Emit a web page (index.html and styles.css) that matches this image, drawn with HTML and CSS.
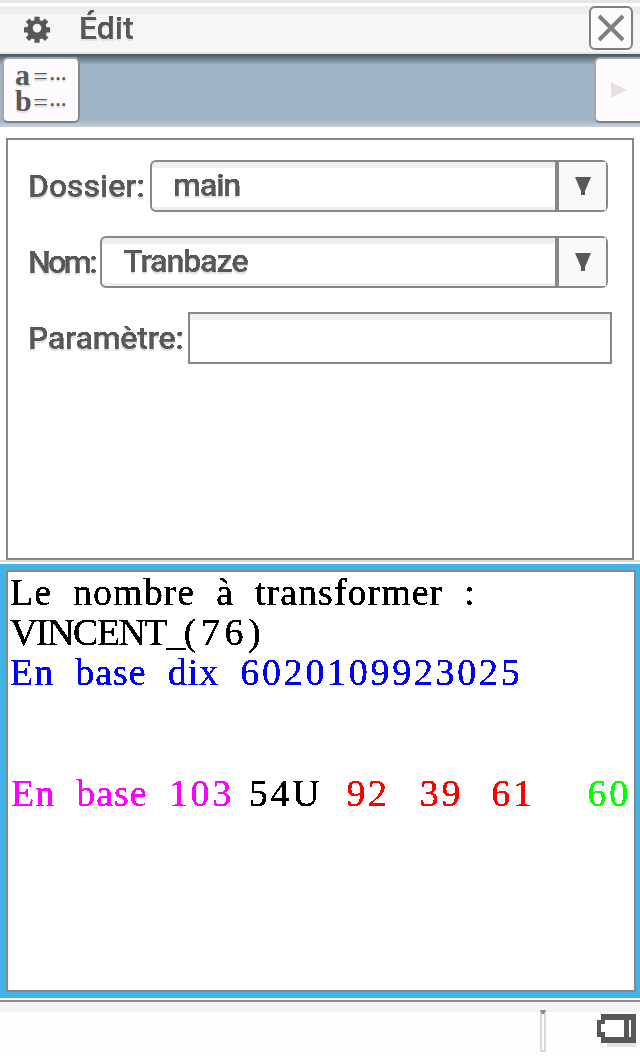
FILE: index.html
```html
<!DOCTYPE html>
<html lang="fr">
<head>
<meta charset="utf-8">
<title>Édit</title>
<link rel="stylesheet" href="styles.css">
</head>
<body>
<svg class="defs" width="0" height="0" aria-hidden="true">
  <filter id="crisp" x="0" y="-10%" width="100%" height="120%" color-interpolation-filters="sRGB">
    <feComponentTransfer><feFuncA type="discrete" tableValues="0 1 1 1"/></feComponentTransfer>
  </filter>
</svg>
<div class="app">
  <header class="menubar">
    <svg class="gear" width="30" height="30" viewBox="0 0 30 30">
      <path fill="#585858" fill-rule="evenodd" d="M12 2h6v4l3 1 3-3 4 4-3 3 1 3h4v6h-4l-1 3 3 3-4 4-3-3-3 1v4h-6v-4l-3-1-3 3-4-4 3-3-1-3H0v-6h4l1-3-3-3 4-4 3 3 3-1z M15 10a5 5 0 1 0 0 10a5 5 0 1 0 0-10z" transform="translate(2 2) scale(.87)"/>
    </svg>
    <span class="menu-label">Édit</span>
    <button class="close" aria-label="Fermer">
      <svg width="30" height="30" viewBox="0 0 30 30"><path d="M3 3l24 24M27 3L3 27" stroke="#808080" stroke-width="4" fill="none"/></svg>
    </button>
  </header>
  <div class="toolbar">
    <div class="tool-btn vars">
      <span class="var-line"><b>a</b><u>=</u><i>…</i></span>
      <span class="var-line"><b>b</b><u>=</u><i>…</i></span>
    </div>
    <div class="tool-btn more">
      <svg width="16" height="16" viewBox="0 0 16 16"><path d="M0 0l16 8L0 16z" fill="#e4e0e4"/></svg>
    </div>
  </div>
  <main class="panel form">
    <div class="row">
      <span class="label">Dossier:</span>
      <div class="select"><span class="value">main</span>
        <span class="arrow"><svg width="16" height="20" viewBox="0 0 16 20"><path d="M0 0h16L10 14v4H6v-4z" fill="#585858"/></svg></span>
      </div>
    </div>
    <div class="row">
      <span class="label label-nom">Nom:</span>
      <div class="select"><span class="value">Tranbaze</span>
        <span class="arrow"><svg width="16" height="20" viewBox="0 0 16 20"><path d="M0 0h16L10 14v4H6v-4z" fill="#585858"/></svg></span>
      </div>
    </div>
    <div class="row">
      <span class="label label-param">Paramètre:</span>
      <div class="input"></div>
    </div>
  </main>
  <section class="output">
    <div class="console">
      <p>Le nombre à transformer :</p>
      <p class="caps">VINCENT_<span class="num">(76)</span></p>
      <p class="blue">En base dix <span class="num">6020109923025</span></p>
      <p>&nbsp;</p>
      <p class="result"><span class="magenta">En base <span class="num">103</span></span><span class="num black g1">54U</span><span class="num red g2">92</span><span class="num red g3">39</span><span class="num red g4">61</span><span class="num green g5">60</span></p>
    </div>
  </section>
  <footer class="status">
    <span class="status-divider"></span>
    <svg class="battery" width="39" height="33" viewBox="0 0 39 33">
      <path d="M10 4h29v29H10z" fill="#e4e0e4"/>
      <path d="M4 0h35v29H4v-6H0V6h4z" fill="#585858"/>
      <path d="M8 6h26v17H8v-5H4V10h4z" fill="#fff"/>
      <path d="M27 6h5v17h-5z" fill="#585858"/>
    </svg>
  </footer>
</div>
</body>
</html>
```
FILE: styles.css
```css
* { box-sizing: border-box; }
html, body { margin: 0; padding: 0; background: #fff; }
.defs { position: absolute; }
.app { width: 640px; height: 1056px; display: flex; flex-direction: column; overflow: hidden; font-family: Roboto, sans-serif; color: #585858; }

.menubar {
  height: 54px; display: flex; align-items: center; padding: 0 7px 0 22px;
  border-top: 3px solid #e8e4e8;
  border-bottom: 2px solid #e8e4e8;
  background: linear-gradient(#fff 0 3px, #ececec 3px 11px, #f8f4f8 11px, #f4f8f4 100%);
}
.gear { display: block; }
.menu-label { margin-left: 27px; font-size: 32px; font-weight: 500; line-height: 40px; text-shadow: 0 2px #e4e0e4; filter: url(#crisp); }
.close {
  margin-left: auto; width: 44px; height: 44px; padding: 0; display: flex; align-items: center; justify-content: center;
  background: #fdfbfd; border: 2px solid #808080; border-radius: 6px;
}

.toolbar {
  height: 73px; display: flex; justify-content: space-between; padding: 3px 0 4px 2px;
  background: linear-gradient(#46565e 0, #7f939f 7px, #9fb4c4 11px, #9fb4c4 66px, #c8d0dc 100%);
}
.tool-btn {
  height: 66px; background: #fdfbfd; border: 2px solid #a8a4a8; border-bottom-color: #808080; border-right-color: #888;
  display: flex; flex-direction: column; justify-content: center; align-items: center;
}
.vars { width: 78px; border-radius: 6px; }
.more { width: 46px; border-radius: 6px 0 0 6px; border-right: 0; padding-left: 2px; }
.var-line { display: flex; align-items: baseline; font-family: "Liberation Serif", serif; line-height: 21px; text-shadow: 0 2px #e4e0e4; white-space: nowrap; }
.var-line b { font-size: 30px; font-weight: 700; width: 17px; }
.var-line u { font-size: 26px; text-decoration: none; width: 17px; text-align: center; }
.var-line i { font-family: "Liberation Sans", sans-serif; font-weight: 700; font-style: normal; font-size: 18px; position: relative; top: -5px; }

.panel.form {
  margin: 11px 6px 0; height: 422px; border: 2px solid #888; padding: 20px 0 0 20px; background: #fff;
  display: flex; flex-direction: column; gap: 24px;
}
.row { display: flex; align-items: center; height: 52px; }
.label { font-size: 32px; font-weight: 500; line-height: 42px; text-shadow: 0 2px #e4e0e4; white-space: nowrap; margin-right: 5px; filter: url(#crisp); }
.label-nom { letter-spacing: -2.5px; margin-right: 5px; }
.label-param { letter-spacing: -.2px; margin-right: 4px; }
.select {
  flex: 1; margin-right: 24px; height: 52px; display: flex; align-items: stretch;
  border: 2px solid #888; border-radius: 6px; background: linear-gradient(#f0eef0 0 6px, #fff 6px 45px, #f0eef0 45px);
}
.value { flex: 1; padding-left: 21px; font-size: 32px; font-weight: 500; line-height: 46px; text-shadow: 0 2px #e4e0e4; letter-spacing: -1px; border-right: 4px solid #888; filter: url(#crisp); }
.arrow { width: 47px; display: flex; align-items: center; justify-content: center; padding-top: 2px; background: #faf8fa; }
.input { flex: 1; margin-right: 20px; height: 52px; border: 2px solid #888; background: linear-gradient(#f0eef0 0 6px, #fff 6px); }

.output { border-top: 2px solid #d8d8d8; padding-top: 2px; flex: none; }
.console { height: 434px; border: solid #3fb4e8; border-width: 6px 4px 6px 6px; background: #fff; box-shadow: inset 2px 2px 0 #888, inset -2px -2px 0 #888; padding: 2px 0 0 4px;
  font-family: "Liberation Serif", serif; font-size: 38px; line-height: 40px; color: #000; }
.console p { margin: 0; word-spacing: 10.5px; letter-spacing: 1px; white-space: nowrap; filter: url(#crisp); }
.console p.caps { letter-spacing: -1.5px; }
.console .num { letter-spacing: 2.7px; }
.console .caps .num { letter-spacing: 4.5px; }
.blue { color: #0000ff; }
.magenta { color: #ff00ff; }
.black { color: #000; }
.red { color: #ff0000; }
.green { color: #00ff00; }
.console p.result { display: flex; margin-top: 41px; padding-left: 1px; }
.g1 { margin-left: 15px; }
.g2 { margin-left: 24px; }
.g3 { margin-left: 30px; }
.g4 { margin-left: 28px; }
.g5 { margin-left: 53px; }

.status { flex: 1; margin-top: 2px; border-top: 2px solid #908c90; background: linear-gradient(#f4f2f4 0 10px, #fefcfe 10px); display: flex; align-items: center; padding: 8px 4px 4px 0; justify-content: flex-end; }
.status-divider { width: 6px; height: 42px; border: solid #d8d8d8; border-width: 0 2px 2px; border-top: 4px solid #888; margin-right: 51px; }
.battery { display: block; margin-bottom: 2px; }
```
